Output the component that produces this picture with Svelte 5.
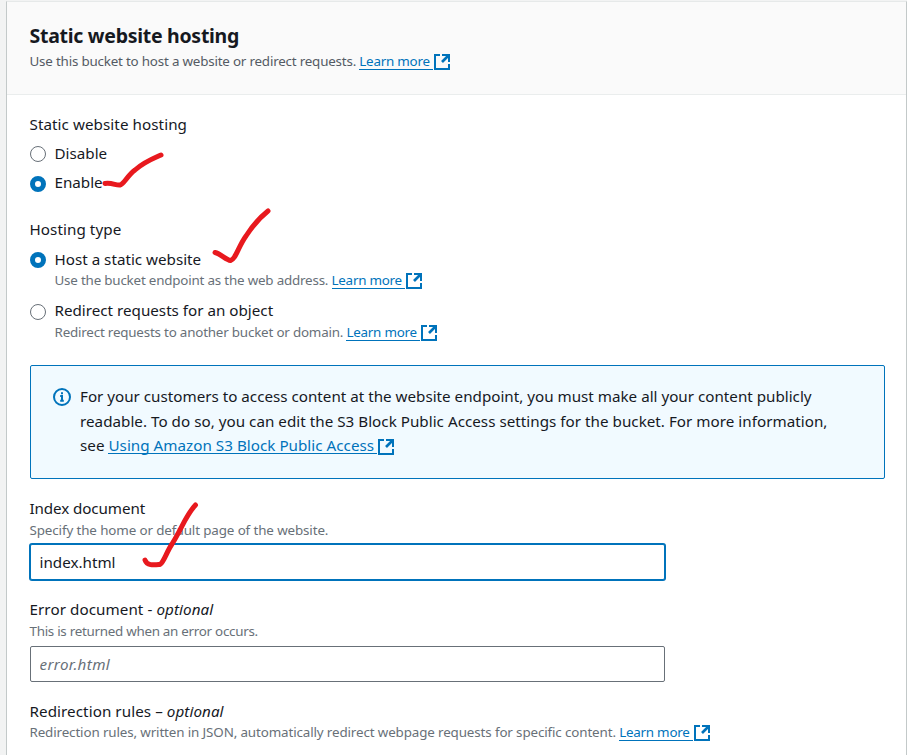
<script>
  let hosting = $state('enable');
  let hostingType = $state('static');
  let indexDocument = $state('index.html');
  let errorDocument = $state('');
</script>

{#snippet link(label)}
  <a class="link" href="#top"><span class="link-text">{label}</span><svg class="external" viewBox="0 0 16 16" aria-hidden="true"><path d="M6 1H1v14h14V10" /><path d="M8 1h7v7" /><path class="shaft" d="M14.5 1.5L8 8" /></svg></a>
{/snippet}

<div class="page">
  <section class="card">
    <header>
      <h2>Static website hosting</h2>
      <p class="desc head-desc">Use this bucket to host a website or redirect requests. {@render link('Learn more')}</p>
    </header>

    <div class="body">
      <div class="field">
        <div class="label wide">Static website hosting</div>
        <label class="option first"><input type="radio" value="disable" bind:group={hosting} /><span>Disable</span></label>
        <label class="option second raised"><input type="radio" value="enable" bind:group={hosting} /><span>Enable</span></label>
      </div>

      <div class="field type">
        <div class="label wide">Hosting type</div>
        <label class="option host"><input type="radio" value="static" bind:group={hostingType} /><span>Host a static website</span></label>
        <p class="desc indent">Use the bucket endpoint as the web address. {@render link('Learn more')}</p>
        <label class="option redirect raised"><input type="radio" value="redirect" bind:group={hostingType} /><span>Redirect requests for an object</span></label>
        <p class="desc indent">Redirect requests to another bucket or domain. {@render link('Learn more')}</p>
      </div>

      <div class="alert">
        <svg class="info" viewBox="0 0 18 18" aria-hidden="true"><circle cx="9" cy="9" r="8" /><path d="M9 4.2v2M7.2 8H9v5M7.2 12.7h3.6" /></svg>
        <p>
          For your customers to access content at the website endpoint, you must make all your content publicly<br />
          <span class="loose">readable. To do so, you can edit the S3 Block Public Access settings for the bucket. For more information,</span><br />
          <span class="loose">see {@render link('Using Amazon S3 Block Public Access')}</span>
        </p>
      </div>

      <div class="field index">
        <div class="label tight">Index document</div>
        <p class="desc">Specify the home or default page of the website.</p>
        <input class="text focused" type="text" bind:value={indexDocument} />
      </div>

      <div class="field error">
        <div class="label">Error document - <i>optional</i></div>
        <p class="desc">This is returned when an error occurs.</p>
        <input class="text" type="text" placeholder="error.html" bind:value={errorDocument} />
      </div>

      <div class="field rules">
        <div class="label">Redirection rules – <i>optional</i></div>
        <p class="desc">Redirection rules, written in JSON, automatically redirect webpage requests for specific content. {@render link('Learn more')}</p>
      </div>
    </div>
  </section>

  <svg class="marks" viewBox="0 0 907 755" aria-hidden="true">
    <path d="M105 183.5C112 182.5 116 185.5 120 185C124 184 127 176 135 170C144 162 152 159 161 155" />
    <path d="M215 252.5C221 254 226 260 230.5 260.5C236 259 238 247 246 236C253 225 258 219 268 211" />
    <path d="M145 560C147 566 154 565 160 564.5C164 562 166 553 172 544C182 528 186 515 195.5 505" />
  </svg>
</div>

<style>
  :global(body) { margin: 0; }
  .page {
    position: relative;
    box-sizing: border-box;
    width: 907px;
    height: 755px;
    padding: 1px 0 0 6px;
    overflow: hidden;
    background: #f2f3f3;
    color: #16191f;
    font-family: "Noto Sans", "Open Sans", sans-serif;
    font-size: 15.2px;
  }
  .card {
    box-sizing: border-box;
    height: 760px;
    background: #fff;
    border: 1px solid #c3c9c9;
    border-top-color: #e6e9e9;
  }
  header {
    box-sizing: border-box;
    height: 93px;
    padding: 23px 22.5px 0;
    background: #fafafa;
    border-bottom: 1px solid #eaeded;
  }
  h2 { margin: 0; font-size: 19.5px; line-height: 22px; font-weight: 700; letter-spacing: -0.28px; white-space: nowrap; }
  p { margin: 0; }
  .desc { font-size: 13.4px; line-height: 20px; color: #687078; letter-spacing: -0.2px; white-space: nowrap; }
  .head-desc { margin-top: 4px; color: #545b64; }
  .body { padding: 19px 21px 0 22.5px; }
  .label, .option { line-height: 22px; white-space: nowrap; }
  .label { line-height: 20px; padding-bottom: 2px; }
  .wide { letter-spacing: 0.07px; }
  .tight { letter-spacing: -0.1px; }
  .option { display: flex; align-items: center; gap: 9px; }
  .raised span { line-height: 20px; padding-bottom: 2px; }
  .first { margin-top: 6px; }
  .second { margin-top: 8px; }
  .host { margin-top: 7px; }
  .redirect { margin-top: 10px; }
  input[type='radio'] {
    appearance: none;
    box-sizing: border-box;
    width: 16px;
    height: 16px;
    margin: 0;
    position: relative;
    top: 1px;
    border: 1px solid #687078;
    border-radius: 50%;
    background: #fff;
  }
  input[type='radio']:checked { border: 5px solid #0073bb; }
  .indent { padding-left: 25px; }
  .type { margin-top: 25px; }
  .link { color: #0073bb; text-decoration: none; white-space: nowrap; }
  .link-text { display: inline-block; line-height: 15px; border-bottom: 1px solid #0073bb; padding-right: 3px; }
  .desc .link-text { letter-spacing: -0.24px; }
  .external { width: 16px; height: 16px; vertical-align: -4px; margin-left: 1px; fill: none; stroke: currentColor; stroke-width: 2; }
  .shaft { stroke-width: 2.6; }
  .alert {
    display: flex;
    box-sizing: border-box;
    height: 114px;
    margin-top: 23px;
    padding: 18px 22px;
    gap: 9.5px;
    background: #f1faff;
    border: 1px solid #0073bb;
    border-radius: 2px;
    line-height: 24.5px;
    white-space: nowrap;
  }
  .loose { letter-spacing: 0.025px; }
  .info { flex: none; width: 18px; height: 18px; margin-top: 4px; fill: none; stroke: #0073bb; stroke-width: 2; }
  .index { margin-top: 19px; }
  .index .desc { letter-spacing: -0.12px; }
  .text {
    display: block;
    box-sizing: border-box;
    width: 635px;
    height: 36px;
    margin: 4px 0 0;
    padding: 0 9px;
    border: 1px solid #687078;
    border-radius: 2px;
    outline: none;
    font: inherit;
    color: inherit;
    background: #fff;
  }
  .focused { border-color: #0073bb; box-shadow: 0 0 0 1px #0073bb; }
  .text::placeholder { color: #687078; font-style: italic; letter-spacing: 0.35px; opacity: 1; }
  .error, .rules { margin-top: 19px; }
  .error .text { margin-top: 5px; }
  .error .label, .rules .label { letter-spacing: 0.07px; }
  .error .desc { letter-spacing: -0.28px; }
  .rules .desc { margin-top: -1px; letter-spacing: -0.13px; }
  .marks { position: absolute; left: 0; top: 0; width: 907px; height: 755px; pointer-events: none; fill: none; stroke: #e8191e; stroke-width: 5; stroke-linecap: round; stroke-linejoin: round; }
</style>
